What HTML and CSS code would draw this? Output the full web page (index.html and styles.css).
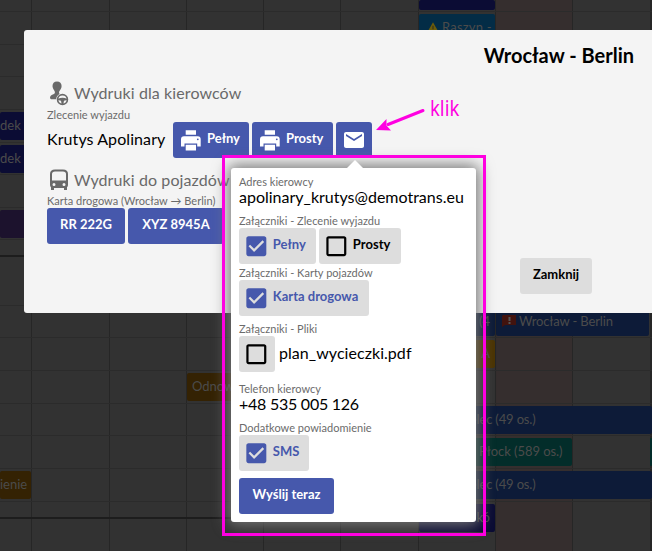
FILE: index.html
```html
<!DOCTYPE html>
<html lang="pl">
<head>
<meta charset="utf-8">
<title>Wrocław - Berlin</title>
<link rel="stylesheet" href="styles.css">
</head>
<body>
<svg class="defs" width="0" height="0">
  <symbol id="print" viewBox="0 0 20 21"><path d="M4.700.3h10.300v4.400H4.700zM3 6.300h13.700a3 3 0 013 3v7.200h-3.500v-3H3.500v3H0V9.300a3 3 0 013-3zM4.700 14.700h10.300v5.800H4.700z"/><circle class="slit" cx="16.800" cy="9.300" r=".9"/></symbol>
  <symbol id="mail" viewBox="0 0 24 24"><path d="M20 4H4c-1.100 0-2 .9-2 2v12c0 1.100.9 2 2 2h16c1.100 0 2-.9 2-2V6c0-1.100-.9-2-2-2zm0 4-8 5-8-5V6l8 5 8-5v2z"/></symbol>
  <symbol id="checked" viewBox="0 0 24 24"><path d="M19 3H5c-1.110 0-2 .9-2 2v14c0 1.100.89 2 2 2h14c1.110 0 2-.9 2-2V5c0-1.100-.89-2-2-2zm-9 14-5-5 1.410-1.410L10 14.170l7.590-7.590L19 8l-9 9z"/></symbol>
  <symbol id="unchecked" viewBox="0 0 24 24"><path d="M19 5v14H5V5h14m0-2H5c-1.100 0-2 .9-2 2v14c0 1.100.9 2 2 2h14c1.100 0 2-.9 2-2V5c0-1.100-.9-2-2-2z"/></symbol>
</svg>
<div class="app">
  <div class="columns"><i></i><i></i><i></i><i></i><i></i><i></i><i></i><i class="weekend"></i><i></i><i></i></div>
  <div class="rows">
    <div class="row h12"><div class="event navy day short"></div></div>
    <div class="row h33"><div class="event sky day"><svg width="12" height="11" viewBox="0 0 14 12"><path d="M7 0l7 12H0z" fill="#6b5c0b"/><path d="M6.500 4h1v4h-1zM6.500 9h1v1h-1z" fill="#222"/></svg>Raszyn -</div></div>
    <div class="row h32"></div>
    <div class="row h33"></div>
    <div class="row h33"><div class="event navy left tuck">dek o</div></div>
    <div class="row h33"><div class="event navy left tuck">dek</div></div>
    <div class="row h32"></div>
    <div class="row h33"><div class="event purple left"></div></div>
    <div class="row h17 thick"></div>
    <div class="row h48"></div>
    <div class="row h32"><div class="event blue day end">(4</div><div class="event blue two"><svg width="14" height="12" viewBox="0 0 14 12"><path d="M1 0h13v10H3l-3 2V1z" fill="#42130e"/><path d="M6.500 2h2v4h-2zM6.500 7h2v2h-2z" fill="#555"/></svg>Wrocław - Berlin</div></div>
    <div class="row h33"><div class="event orange day end">A</div></div>
    <div class="row h33"><div class="event brown mid">Odnow</div></div>
    <div class="row h32"><div class="event blue wide">Mielec (49 os.)</div></div>
    <div class="row h33"><div class="event teal span2">Płock (589 os.)</div><div class="event teal last"></div></div>
    <div class="row h33"><div class="event brown left end">ienie</div><div class="event blue wide">Mielec (49 os.)</div></div>
    <div class="row h17 thick half"><div class="event navy day end">kó</div></div>
    <div class="row h32 bare"></div>
  </div>
  <main class="dialog">
    <h1>Wrocław - Berlin</h1>
    <section>
      <h2><svg width="24" height="26" viewBox="0 0 24 26"><path d="M10 1.500c3 0 4.600 1.700 4.600 4.600 0 2.400-1.400 4-2.400 5.400-.5 1 .2 2 .4 2.500-2.200 1.200-3.400 3-3.400 5.200H4c-1.400-.6-1.200-2.800 0-3.800 1.500-1.200 3.600-1.200 3.900-2.700.3-2-2.400-3.400-2.400-6.600C5.500 3.200 7 1.500 10 1.500z" fill="#696969"/><circle cx="15.500" cy="19.500" r="4.900" fill="#f4f4f4" stroke="#696969" stroke-width="1.700"/><path d="M11 18.700q4.500-2 9 0v1.300l-3 .8-.7 3.500h-1.600l-.7-3.500-3-.8z" fill="#696969"/></svg>Wydruki dla kierowców</h2>
      <p class="label">Zlecenie wyjazdu</p>
      <div class="line"><span class="name">Krutys Apolinary</span>
        <button class="btn w76"><svg width="20" height="21"><use href="#print"/></svg>Pełny</button>
        <button class="btn w81"><svg width="20" height="21"><use href="#print"/></svg>Prosty</button>
        <button class="btn w36"><svg width="24" height="24"><use href="#mail"/></svg></button>
      </div>
    </section>
    <section class="vehicles">
      <h2><svg width="24" height="24" viewBox="0 0 24 24"><path fill="#696969" fill-rule="evenodd" d="M8 1.500h8q5 0 5 4.500v11q0 1.500-1 2.300V22h-3v-2H7v2H4v-2.700Q3 18.500 3 17V6q0-4.500 5-4.500zM8 3.500Q5 3.500 5 6v6.500h14V6q0-2.500-3-2.500zM7 15a1.500 1.500 0 100 3 1.500 1.500 0 000-3zm10 0a1.500 1.500 0 100 3 1.500 1.500 0 000-3z"/></svg>Wydruki do pojazdów</h2>
      <p class="label tight">Karta drogowa (Wrocław → Berlin)</p>
      <div class="line"><button class="btn w78">RR 222G</button><button class="btn w96">XYZ 8945A</button></div>
    </section>
    <button class="btn grey close">Zamknij</button>
  </main>
</div>
<aside class="popup">
  <p class="label">Adres kierowcy</p>
  <p class="value">apolinary_krutys@demotrans.eu</p>
  <p class="label gap8">Załączniki - Zlecenie wyjazdu</p>
  <div class="line"><button class="btn grey check on w77"><svg><use href="#checked"/></svg>Pełny</button><button class="btn grey check w82"><svg><use href="#unchecked"/></svg>Prosty</button></div>
  <p class="label gap1">Załączniki - Karty pojazdów</p>
  <div class="line"><button class="btn grey check on w130"><svg><use href="#checked"/></svg>Karta drogowa</button></div>
  <p class="label gap5">Załączniki - Pliki</p>
  <div class="line file"><button class="btn grey check w36"><svg><use href="#unchecked"/></svg></button><span class="filename">plan_wycieczki.pdf</span></div>
  <p class="label gap9">Telefon kierowcy</p>
  <p class="value phone">+48 535 005 126</p>
  <p class="label gap8">Dodatkowe powiadomienie</p>
  <div class="line"><button class="btn grey check on w70"><svg><use href="#checked"/></svg>SMS</button></div>
  <button class="btn w95 send">Wyślij teraz</button>
</aside>
<div class="frame"></div>
<svg class="arrow" width="50" height="26" viewBox="0 0 50 26"><path d="M47 3.500L12 17.500" stroke="#ff00e1" stroke-width="3" stroke-linecap="round"/><path d="M0 23L10.500 12L10.500 18.500L15 23.500z" fill="#ff00e1"/></svg>
<div class="klik">klik</div>
</body>
</html>
```

FILE: styles.css
```css
* { box-sizing: border-box; }
body { margin: 0; width: 652px; height: 551px; overflow: hidden; position: relative; background: #323232; color: #000; font-family: Lato, sans-serif; font-size: 16px; }
h1, h2, p { margin: 0; }
.defs { position: absolute; }
.app { display: grid; width: 652px; height: 551px; grid-template: 551px / 652px; }
.app > * { grid-area: 1 / 1; }

.columns, .row { display: grid; grid-template-columns: 32px 78px 77px 77px 77px 78px 77px 77px 77px 2px; }
.columns { grid-template-columns: 32px 78px 77px 77px 77px 78px 77px 77px 78px 1px; }
.columns i { border-right: 1px solid #262626; }
.columns .weekend { background: #352e2e; }
.rows { min-width: 0; overflow: hidden; }
.row { border-bottom: 1px solid #2b2b2b; padding-top: 2px; align-items: start; }
.h12 { height: 12px; padding-top: 0; }
.h17 { height: 17px; }
.h32 { height: 32.500px; }
.h33 { height: 32.700px; }
.h48 { height: 48.500px; }
.thick { border-bottom: 2px solid #1d1d1d; }
.half { border-image: linear-gradient(90deg, #1d1d1d 418px, transparent 418px) 2; }
.bare { border: 0; }
.event { grid-row: 1; height: 28px; border-radius: 2px; padding-left: 8px; overflow: hidden; white-space: nowrap; color: #4b4b4b; font-size: 13px; line-height: 27px; }
.event svg { margin-right: 3px; vertical-align: -1px; }
.short { height: 10px; }
.left { grid-column: 1; padding: 0 6px 0 0; width: 31px; }
.tuck { padding: 0; width: 60px; }
.mid { grid-column: 4 / 6; padding-left: 5px; }
.day { grid-column: 7; width: 76px; }
.sky { letter-spacing: .2px; }
.two { grid-column: 8 / 10; padding-left: 6px; width: 153px; letter-spacing: -.15px; }
.two svg { margin-right: 3px; }
.wide { grid-column: 7 / 11; padding-left: 36px; letter-spacing: -.15px; }
.span2 { grid-column: 7 / 9; padding-left: 60px; width: 153px; letter-spacing: -.05px; }
.last { grid-column: 10; padding: 0; }
.end { text-align: right; padding-right: 5px; }
.navy { background: #0b0c34; }
.sky { background: #032c46; }
.purple { background: #1c122d; }
.blue { background: #0d1b38; }
.orange { background: #4b3403; }
.brown { background: #342203; }
.teal { background: #032d2a; }

.dialog { margin: 30px 0 0 24px; width: 640px; height: 283px; padding: 12px 30px 0 23px; background: #f4f4f4; border-radius: 3px; display: flex; flex-direction: column; }
h1 { font-size: 20px; line-height: 26px; text-align: right; font-weight: 700; }
section { margin-top: 11px; }
.vehicles { margin-top: 8px; }
.vehicles h2 { margin-bottom: 1px; }
h2 { display: flex; align-items: center; gap: 3px; height: 26px; margin-bottom: 2px; color: #696969; font-size: 16px; font-weight: 400; white-space: nowrap; letter-spacing: .1px; }
h2 svg { margin-top: 2px; }
.label { font-size: 11px; line-height: 16px; height: 15px; color: #6b6b6b; white-space: nowrap; letter-spacing: .02px; }
.line { display: flex; align-items: center; gap: 3px; }
.name { width: 123px; white-space: nowrap; letter-spacing: .08px; position: relative; top: -2px; }
.btn { flex: none; display: flex; align-items: center; justify-content: center; gap: 6px; height: 36px; padding: 0 0 5px; border: 0; border-radius: 3px; background: #4658ac; color: #fff; font: 700 13px Lato, sans-serif; white-space: nowrap; }
.btn svg { fill: currentColor; flex: none; position: relative; top: 2.500px; }
.w76, .w81 { justify-content: flex-start; padding-left: 8px; }
.slit { fill: #4658ac; }
.grey { background: #ddd; color: #000; }
.check { justify-content: flex-start; gap: 2.800px; padding-left: 4.400px; }
.check svg { width: 26.670px; height: 26.670px; }
.on { color: #4658ac; }
.w36 { width: 36px; }
.w70 { width: 70px; }
.w76 { width: 76px; }
.w77 { width: 77px; }
.w78 { width: 78px; }
.w81 { width: 81px; }
.w82 { width: 82px; }
.w95 { width: 95px; }
.w96 { width: 96px; }
.w130 { width: 130px; }
.close { width: 72px; margin: 14px 0 0 473px; }

.popup { position: absolute; left: 231px; top: 168px; width: 245px; height: 354px; padding: 6px 8px; border-radius: 3px; background: #fff; box-shadow: 0 0 15px 3px #777; }
.popup::before { content: ""; position: absolute; left: 116px; top: -8px; border: 8px solid transparent; border-top: 0; border-bottom-color: #fff; }
.value { line-height: 16px; white-space: nowrap; }
.filename { white-space: nowrap; padding-bottom: 3px; }
.phone { letter-spacing: -.25px; }
.file { gap: 4px; letter-spacing: .05px; }
.gap1 { margin-top: 1px; }
.gap5 { margin-top: 5px; }
.gap8 { margin-top: 8px; }
.gap9 { margin-top: 9px; }
.send { margin-top: 7px; }

.frame { position: absolute; left: 222px; top: 155px; width: 264px; height: 381px; border: 3px solid #ff00e1; }
.arrow { position: absolute; left: 376px; top: 107px; }
.klik { position: absolute; left: 430px; top: 94px; font: 21px/28px "Noto Sans", sans-serif; color: #ff00e1; transform: scaleX(.88); transform-origin: left; }
```
